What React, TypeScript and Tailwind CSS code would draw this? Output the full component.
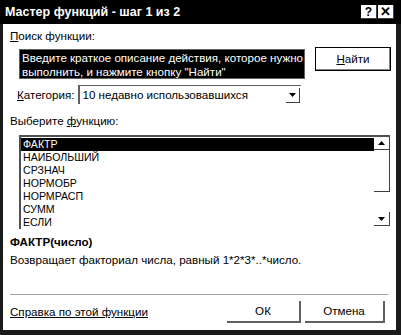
import React from "react";

const items = ["ФАКТР", "НАИБОЛЬШИЙ", "СРЗНАЧ", "НОРМОБР", "НОРМРАСП", "СУММ", "ЕСЛИ"];

function Tri({ up }: { up?: boolean }) {
  return (
    <svg width="7" height="4" viewBox="0 0 7 4">
      <polygon points={up ? "0,4 7,4 3.5,0" : "0,0 7,0 3.5,4"} fill="#000" />
    </svg>
  );
}

export default function App() {
  return (
    <div
      className="flex h-[335px] w-[401px] flex-col bg-[#1a1a1a] text-[11.6px] leading-[14px] text-black"
      style={{ fontFamily: '"Liberation Sans", Arial, sans-serif' }}
    >
      {/* title bar */}
      <div className="flex h-[24px] items-center justify-between bg-black pl-[5px] pr-[7px]">
        <span className="text-[12.5px] font-bold text-white">Мастер функций - шаг 1 из 2</span>
        <div className="flex gap-[1px]">
          <div className="flex h-[14px] w-[16px] items-center justify-center border-b border-r border-[#404040] bg-white text-[12px] font-bold leading-none">
            ?
          </div>
          <div className="flex h-[14px] w-[16px] items-center justify-center border-b border-r border-[#404040] bg-white text-[13px] font-bold leading-none">
            ✕
          </div>
        </div>
      </div>

      {/* body */}
      <div className="mb-[5px] ml-[3px] mr-[5px] flex flex-1 flex-col whitespace-nowrap bg-white pl-[7px] pr-[5px]">
        <div className="mt-[5px]">
          <span className="underline">П</span>оиск функции:
        </div>

        <div className="mt-[4px] flex items-start">
          <div className="ml-[9px] mt-[2px] h-[30px] w-[286px] border border-[#606060] bg-black px-[2px] pt-[1px] text-white">
            Введите краткое описание действия, которое нужно
            <br />
            выполнить, и нажмите кнопку "Найти"
          </div>
          <div className="ml-[10px] flex h-[24px] w-[76px] items-center justify-center border border-black shadow-[inset_-1px_-1px_0_#808080]">
            <span>
              <span className="underline">Н</span>айти
            </span>
          </div>
        </div>

        <div className="mt-[6px] flex items-center">
          <span className="ml-[7px]">
            <span className="underline">К</span>атегория:
          </span>
          <div className="ml-[4px] flex h-[19px] w-[223px] items-center border-l-2 border-t border-[#606060] pl-[2px]">
            <span className="flex-1">10 недавно использовавшихся</span>
            <div className="mr-[1px] flex h-[15px] w-[14px] items-center justify-center border-b border-r border-[#404040]">
              <Tri />
            </div>
          </div>
        </div>

        <div className="mt-[10px]">
          Выберите <span className="underline">ф</span>ункцию:
        </div>

        <div className="ml-[9px] mt-[7px] flex h-[94px] w-[371px] border-l-2 border-t-2 border-[#505050]">
          <div className="flex-1 pt-[1px]">
            {items.map((it, i) => (
              <div
                key={it}
                className={`h-[13px] pl-[2px] text-[10.6px] leading-[13px] ${i === 0 ? "bg-black text-white" : ""}`}
              >
                {it}
              </div>
            ))}
          </div>
          <div className="flex w-[16px] flex-col">
            <div className="flex h-[13px] items-center justify-center border-b border-r border-[#404040]">
              <Tri up />
            </div>
            <div className="h-[42px] border-b border-r border-[#404040]" />
            <div className="flex-1" />
            <div className="mb-[3px] flex h-[14px] items-center justify-center border-b border-r border-[#404040]">
              <Tri />
            </div>
          </div>
        </div>

        <div className="mt-[6px] font-bold">ФАКТР(число)</div>
        <div className="mt-[4px]">Возвращает факториал числа, равный 1*2*3*..*число.</div>

        <div className="mt-[27px] h-[1px] w-[378px] bg-[#a0a0a0]" />

        <div className="mt-[6px] flex items-center">
          <span className="flex-1 underline">Справка по этой функции</span>
          <div className="flex h-[22px] w-[74px] items-center justify-center border-b-2 border-r-2 border-[#606060]">
            ОК
          </div>
          <div className="ml-[4px] mr-[6px] flex h-[22px] w-[80px] items-center justify-center border-b-2 border-r-2 border-[#606060]">
            Отмена
          </div>
        </div>
      </div>
    </div>
  );
}
